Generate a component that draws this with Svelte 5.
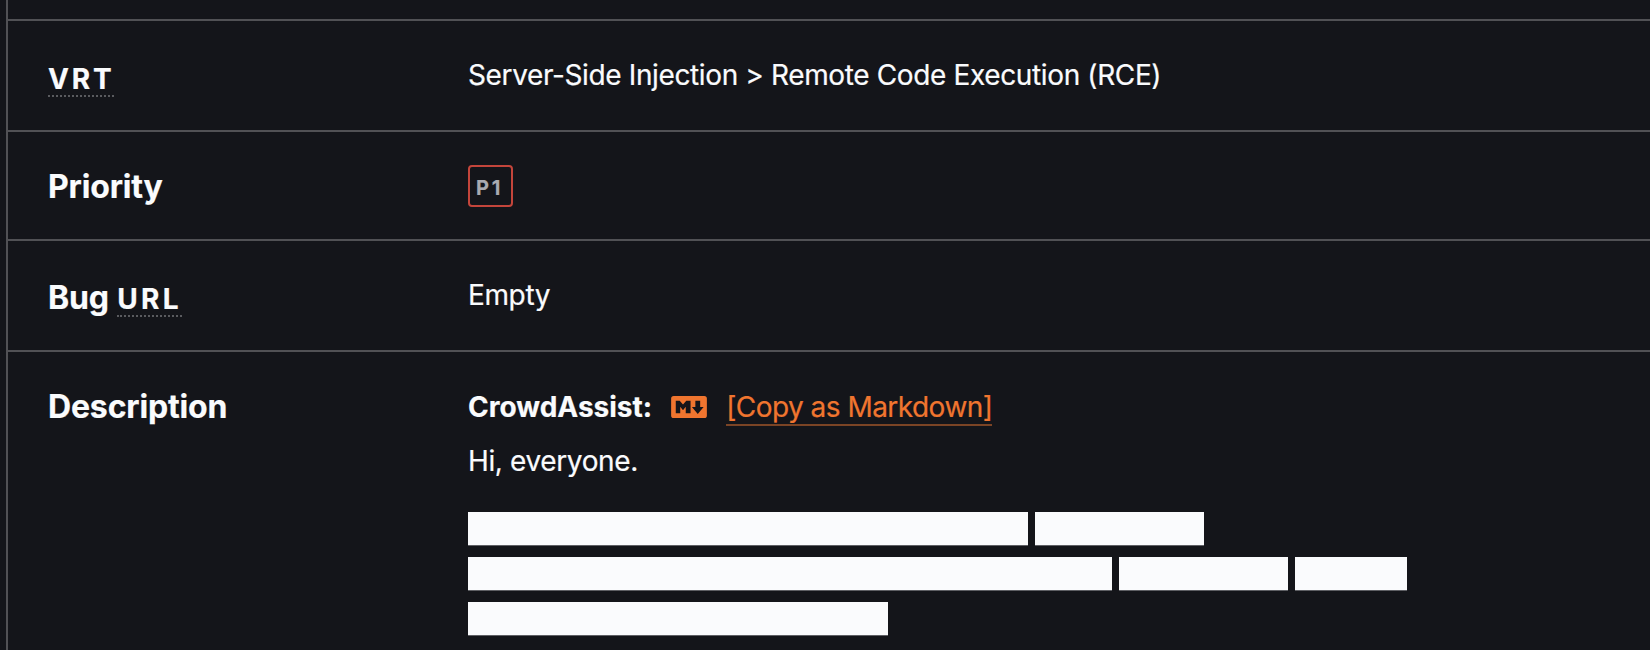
<script>
  // Lengths of the redacted words, in characters, line by line.
  const redacted = [[20, 6], [23, 6, 4], [15]];
  const charWidth = 28.02;
</script>

<main>
  <dl>
    <div class="row lead"></div>
    <div class="row vrt">
      <dt><abbr>VRT</abbr></dt>
      <dd><span class="vrt-value">Server-Side Injection &gt; Remote Code Execution (RCE)</span></dd>
    </div>
    <div class="row priority">
      <dt><span class="priority-label">Priority</span></dt>
      <dd><span class="badge">P1</span></dd>
    </div>
    <div class="row url">
      <dt><span class="bug">Bug</span> <abbr>URL</abbr></dt>
      <dd>Empty</dd>
    </div>
    <div class="row description">
      <dt><span class="description-label">Description</span></dt>
      <dd>
        <div class="heading">
          <strong>CrowdAssist:</strong>
          <svg class="mark" viewBox="0 0 208 128" aria-hidden="true">
            <path
              fill-rule="evenodd"
              d="M15 0H193Q208 0 208 15V113Q208 128 193 128H15Q0 128 0 113V15Q0 0 15 0ZM27 101H53V63L69 83L85 63V101H113V27H88L69 49L50 27H27ZM155 105L189 64H169V27H141V64H121Z"
            />
          </svg>
          <a href="#copy">[Copy as Markdown]</a>
        </div>
        <p>Hi, everyone.</p>
        <div class="blocks">
          {#each redacted as line}
            <div class="line">
              {#each line as count}
                <span class="word" style="width: {count * charWidth}px"></span>
              {/each}
            </div>
          {/each}
        </div>
      </dd>
    </div>
  </dl>
</main>

<style>
  :global(body) {
    background: #14151a;
  }
  main {
    height: 650px;
    padding-left: 6px;
    box-sizing: border-box;
    overflow: hidden;
    background: #14151a;
    color: #fafbfd;
    font: 400 28px/45px Inter, sans-serif;
    letter-spacing: -0.37px;
    -webkit-text-stroke: 0.2px currentColor;
  }
  dl {
    height: 650px;
    margin: 0;
    border-left: 2px solid #515155;
  }
  .row {
    display: grid;
    grid-template-columns: 420px 1fr;
    box-sizing: border-box;
    height: 111px;
    padding-left: 40px;
    border-bottom: 2px solid #515155;
  }
  .lead { height: 21px; }
  .priority { height: 109px; }
  .description {
    height: 298px;
    border: 0;
  }
  dt {
    padding-top: 34px;
    font-size: 32px;
    font-weight: 660;
    letter-spacing: -0.15px;
    white-space: nowrap;
  }
  dd {
    margin: 0;
    padding-top: 32px;
  }
  .priority dt, .description dt { padding-top: 32px; }
  .description dd { padding-top: 33px; }
  .priority dd { padding-top: 33px; }
  abbr {
    display: inline-block;
    height: 38px;
    border-bottom: 2px dotted #5a5b5f;
    font-size: 28px;
    font-weight: 750;
    letter-spacing: 2.8px;
  }
  .url abbr { letter-spacing: 3.3px; margin-left: 1px; }
  .badge {
    display: flex;
    align-items: center;
    box-sizing: border-box;
    width: 45px;
    height: 42px;
    padding: 3px 0 0 6px;
    border: 2px solid #c4453b;
    border-radius: 4px;
    color: #a9aab0;
    font-size: 20px;
    font-weight: 700;
    line-height: 36px;
    letter-spacing: 2.8px;
  }
  .heading {
    display: flex;
    align-items: flex-start;
  }
  strong {
    font-weight: 750;
    letter-spacing: 0;
  }
  .mark {
    width: 36px;
    height: 22px;
    margin: 11px 19px 0 19px;
    fill: #f0752f;
    stroke: none;
    -webkit-text-stroke: 0;
  }
  a {
    height: 39px;
    border-bottom: 2px solid #7b4425;
    color: #f0752f;
    letter-spacing: -0.53px;
    text-decoration: none;
  }
  p {
    margin: 9px 0 0;
    line-height: 45px;
  }
  .blocks {
    display: flex;
    flex-direction: column;
    gap: 11px;
    margin-top: 28px;
  }
  .line {
    display: flex;
    gap: 7px;
    height: 34px;
  }
  .word {
    height: 33px;
    background: #fafbfd;
    border-bottom: 1px solid #5e5f64;
  }
</style>
